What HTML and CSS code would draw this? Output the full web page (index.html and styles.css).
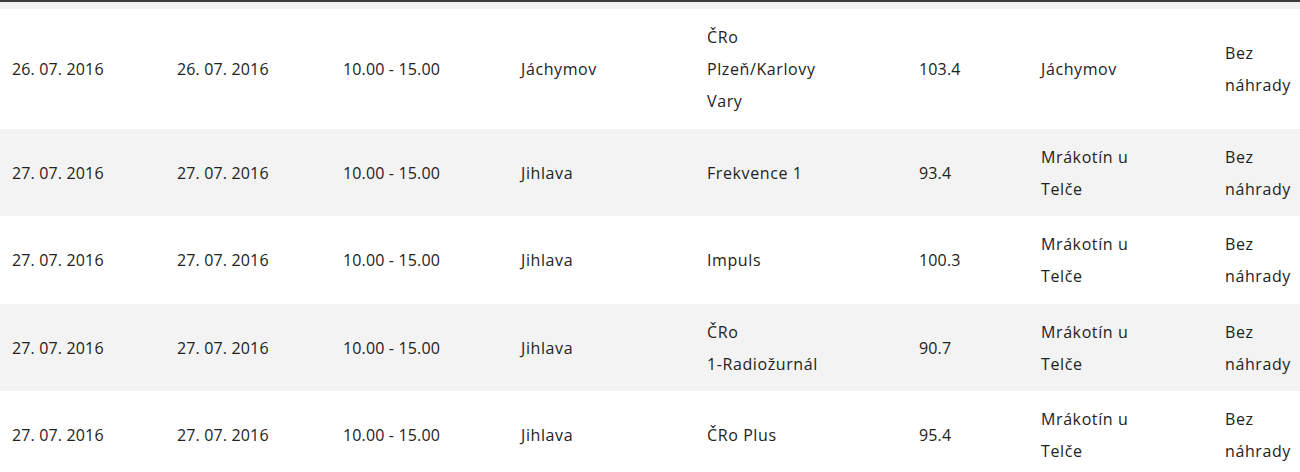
FILE: index.html
```html
<!DOCTYPE html>
<html lang="cs">
<head>
<meta charset="utf-8">
<title>Odstávky vysílačů</title>
<link rel="stylesheet" href="styles.css">
</head>
<body>
<div class="topbar"></div>
<table class="schedule">
  <colgroup>
    <col class="c1"><col class="c2"><col class="c3"><col class="c4">
    <col class="c5"><col class="c6"><col class="c7"><col class="c8">
  </colgroup>
  <tbody>
    <tr class="odd">
      <td class="num">26. 07. 2016</td><td class="num">26. 07. 2016</td><td class="num">10.00 - 15.00</td><td class="word">Jáchymov</td>
      <td class="word station">ČRo Plzeň/Karlovy Vary</td><td class="num">103.4</td><td class="word place">Jáchymov</td><td class="word note">Bez náhrady</td>
    </tr>
    <tr class="even">
      <td class="num">27. 07. 2016</td><td class="num">27. 07. 2016</td><td class="num">10.00 - 15.00</td><td class="word">Jihlava</td>
      <td class="word station">Frekvence 1</td><td class="num">93.4</td><td class="word place">Mrákotín u Telče</td><td class="word note">Bez náhrady</td>
    </tr>
    <tr class="odd">
      <td class="num">27. 07. 2016</td><td class="num">27. 07. 2016</td><td class="num">10.00 - 15.00</td><td class="word">Jihlava</td>
      <td class="word station">Impuls</td><td class="num">100.3</td><td class="word place">Mrákotín u Telče</td><td class="word note">Bez náhrady</td>
    </tr>
    <tr class="even">
      <td class="num">27. 07. 2016</td><td class="num">27. 07. 2016</td><td class="num">10.00 - 15.00</td><td class="word">Jihlava</td>
      <td class="word station">ČRo <span class="nowrap">1-Radiožurnál</span></td><td class="num">90.7</td><td class="word place">Mrákotín u Telče</td><td class="word note">Bez náhrady</td>
    </tr>
    <tr class="odd">
      <td class="num">27. 07. 2016</td><td class="num">27. 07. 2016</td><td class="num">10.00 - 15.00</td><td class="word">Jihlava</td>
      <td class="word station">ČRo Plus</td><td class="num">95.4</td><td class="word place">Mrákotín u Telče</td><td class="word note">Bez náhrady</td>
    </tr>
  </tbody>
</table>
</body>
</html>
```
FILE: styles.css
```css
html, body {
  margin: 0;
  padding: 0;
  background: #ffffff;
  overflow: hidden;
}
body {
  font-family: "Open Sans", "Liberation Sans", sans-serif;
  font-size: 16px;
  color: #222222;
}
.topbar {
  height: 7px;
  border-top: 2px solid #3c3c3c;
  background: #f3f3f3;
}
.schedule {
  width: 1300px;
  table-layout: fixed;
  border-collapse: collapse;
  border-spacing: 0;
}
.c1 { width: 165px; }
.c2 { width: 166px; }
.c3 { width: 178px; }
.c4 { width: 186px; }
.c5 { width: 212px; }
.c6 { width: 122px; }
.c7 { width: 184px; }
.c8 { width: 87px; }
.schedule td {
  padding: 12px 12px 11.5px 12px;
  line-height: 32px;
  vertical-align: middle;
  text-align: left;
}
.schedule td.num { letter-spacing: 0.15px; }
.schedule td.word { letter-spacing: 0.6px; }
.schedule td.station { padding-right: 75px; }
.schedule td.place { padding-right: 67px; }
.schedule td.note { padding-right: 0; }
.nowrap { white-space: nowrap; }
.odd { background: #ffffff; }
.even { background: #f3f3f3; }
```
